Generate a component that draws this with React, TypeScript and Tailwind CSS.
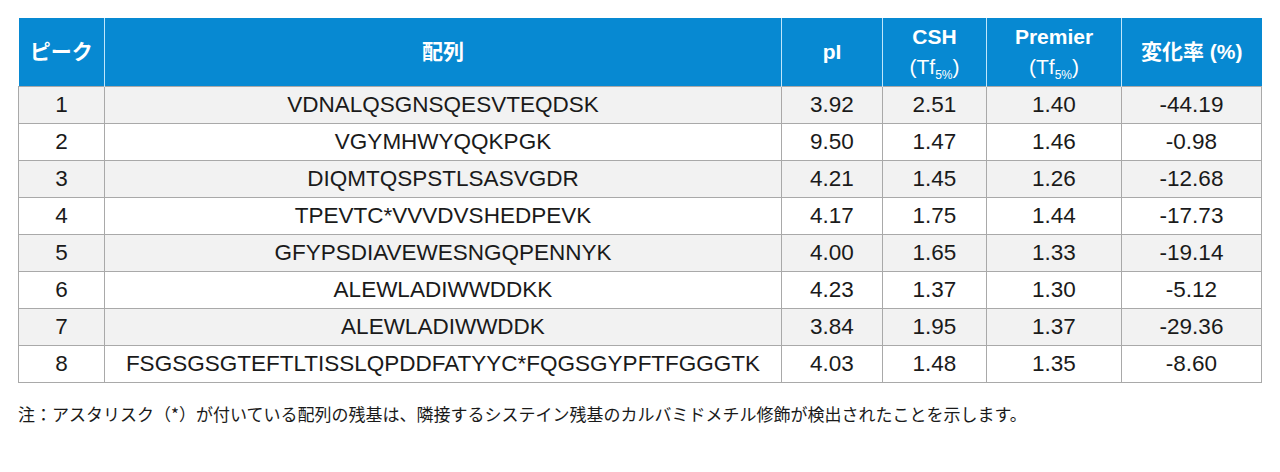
import React from "react";

const rows: [string, string, string, string, string, string][] = [
  ["1", "VDNALQSGNSQESVTEQDSK", "3.92", "2.51", "1.40", "-44.19"],
  ["2", "VGYMHWYQQKPGK", "9.50", "1.47", "1.46", "-0.98"],
  ["3", "DIQMTQSPSTLSASVGDR", "4.21", "1.45", "1.26", "-12.68"],
  ["4", "TPEVTC*VVVDVSHEDPEVK", "4.17", "1.75", "1.44", "-17.73"],
  ["5", "GFYPSDIAVEWESNGQPENNYK", "4.00", "1.65", "1.33", "-19.14"],
  ["6", "ALEWLADIWWDDKK", "4.23", "1.37", "1.30", "-5.12"],
  ["7", "ALEWLADIWWDDK", "3.84", "1.95", "1.37", "-29.36"],
  ["8", "FSGSGSGTEFTLTISSLQPDDFATYYC*FQGSGYPFTFGGGTK", "4.03", "1.48", "1.35", "-8.60"],
];

const head =
  "border-x border-[#bfe6fb] first:border-l-0 last:border-r-0 text-white font-bold text-[21px] leading-[30px] text-center align-middle p-0 whitespace-nowrap";

function Tf() {
  return (
    <span className="font-normal">
      (Tf<sub className="text-[12px] align-baseline relative top-[5px]">5%</sub>)
    </span>
  );
}

export default function App() {
  return (
    <div
      className="w-[1280px] h-[472px] bg-white pt-[18px] pl-[18px]"
      style={{ fontFamily: '"Liberation Sans", Arial, "Noto Sans CJK JP", sans-serif' }}
    >
      <table className="border-collapse table-fixed w-[1243px]">
        <colgroup>
          <col className="w-[86px]" />
          <col className="w-[677px]" />
          <col className="w-[101px]" />
          <col className="w-[104px]" />
          <col className="w-[135px]" />
          <col className="w-[140px]" />
        </colgroup>
        <thead>
          <tr className="h-[68px] bg-[#0789d2]">
            <th className={head}>ピーク</th>
            <th className={head}>配列</th>
            <th className={head}>pI</th>
            <th className={head}>
              CSH
              <br />
              <Tf />
            </th>
            <th className={head}>
              Premier
              <br />
              <Tf />
            </th>
            <th className={head}>変化率 (%)</th>
          </tr>
        </thead>
        <tbody>
          {rows.map((r, i) => (
            <tr key={i} className={`h-[37px] ${i % 2 === 0 ? "bg-[#f2f2f2]" : "bg-white"}`}>
              {r.map((c, j) => (
                <td
                  key={j}
                  className="border border-[#a9a9a9] text-center align-middle text-[22.5px] leading-[26px] text-[#1a1a1a] p-0 whitespace-nowrap"
                >
                  {c}
                </td>
              ))}
            </tr>
          ))}
        </tbody>
      </table>
      <p
        className="mt-[19px] text-[17px] leading-[24px] text-[#1a1a1a]"
        style={{ fontFamily: '"Noto Sans CJK JP", sans-serif' }}
      >
        注：アスタリスク（*）が付いている配列の残基は、隣接するシステイン残基のカルバミドメチル修飾が検出されたことを示します。
      </p>
    </div>
  );
}
